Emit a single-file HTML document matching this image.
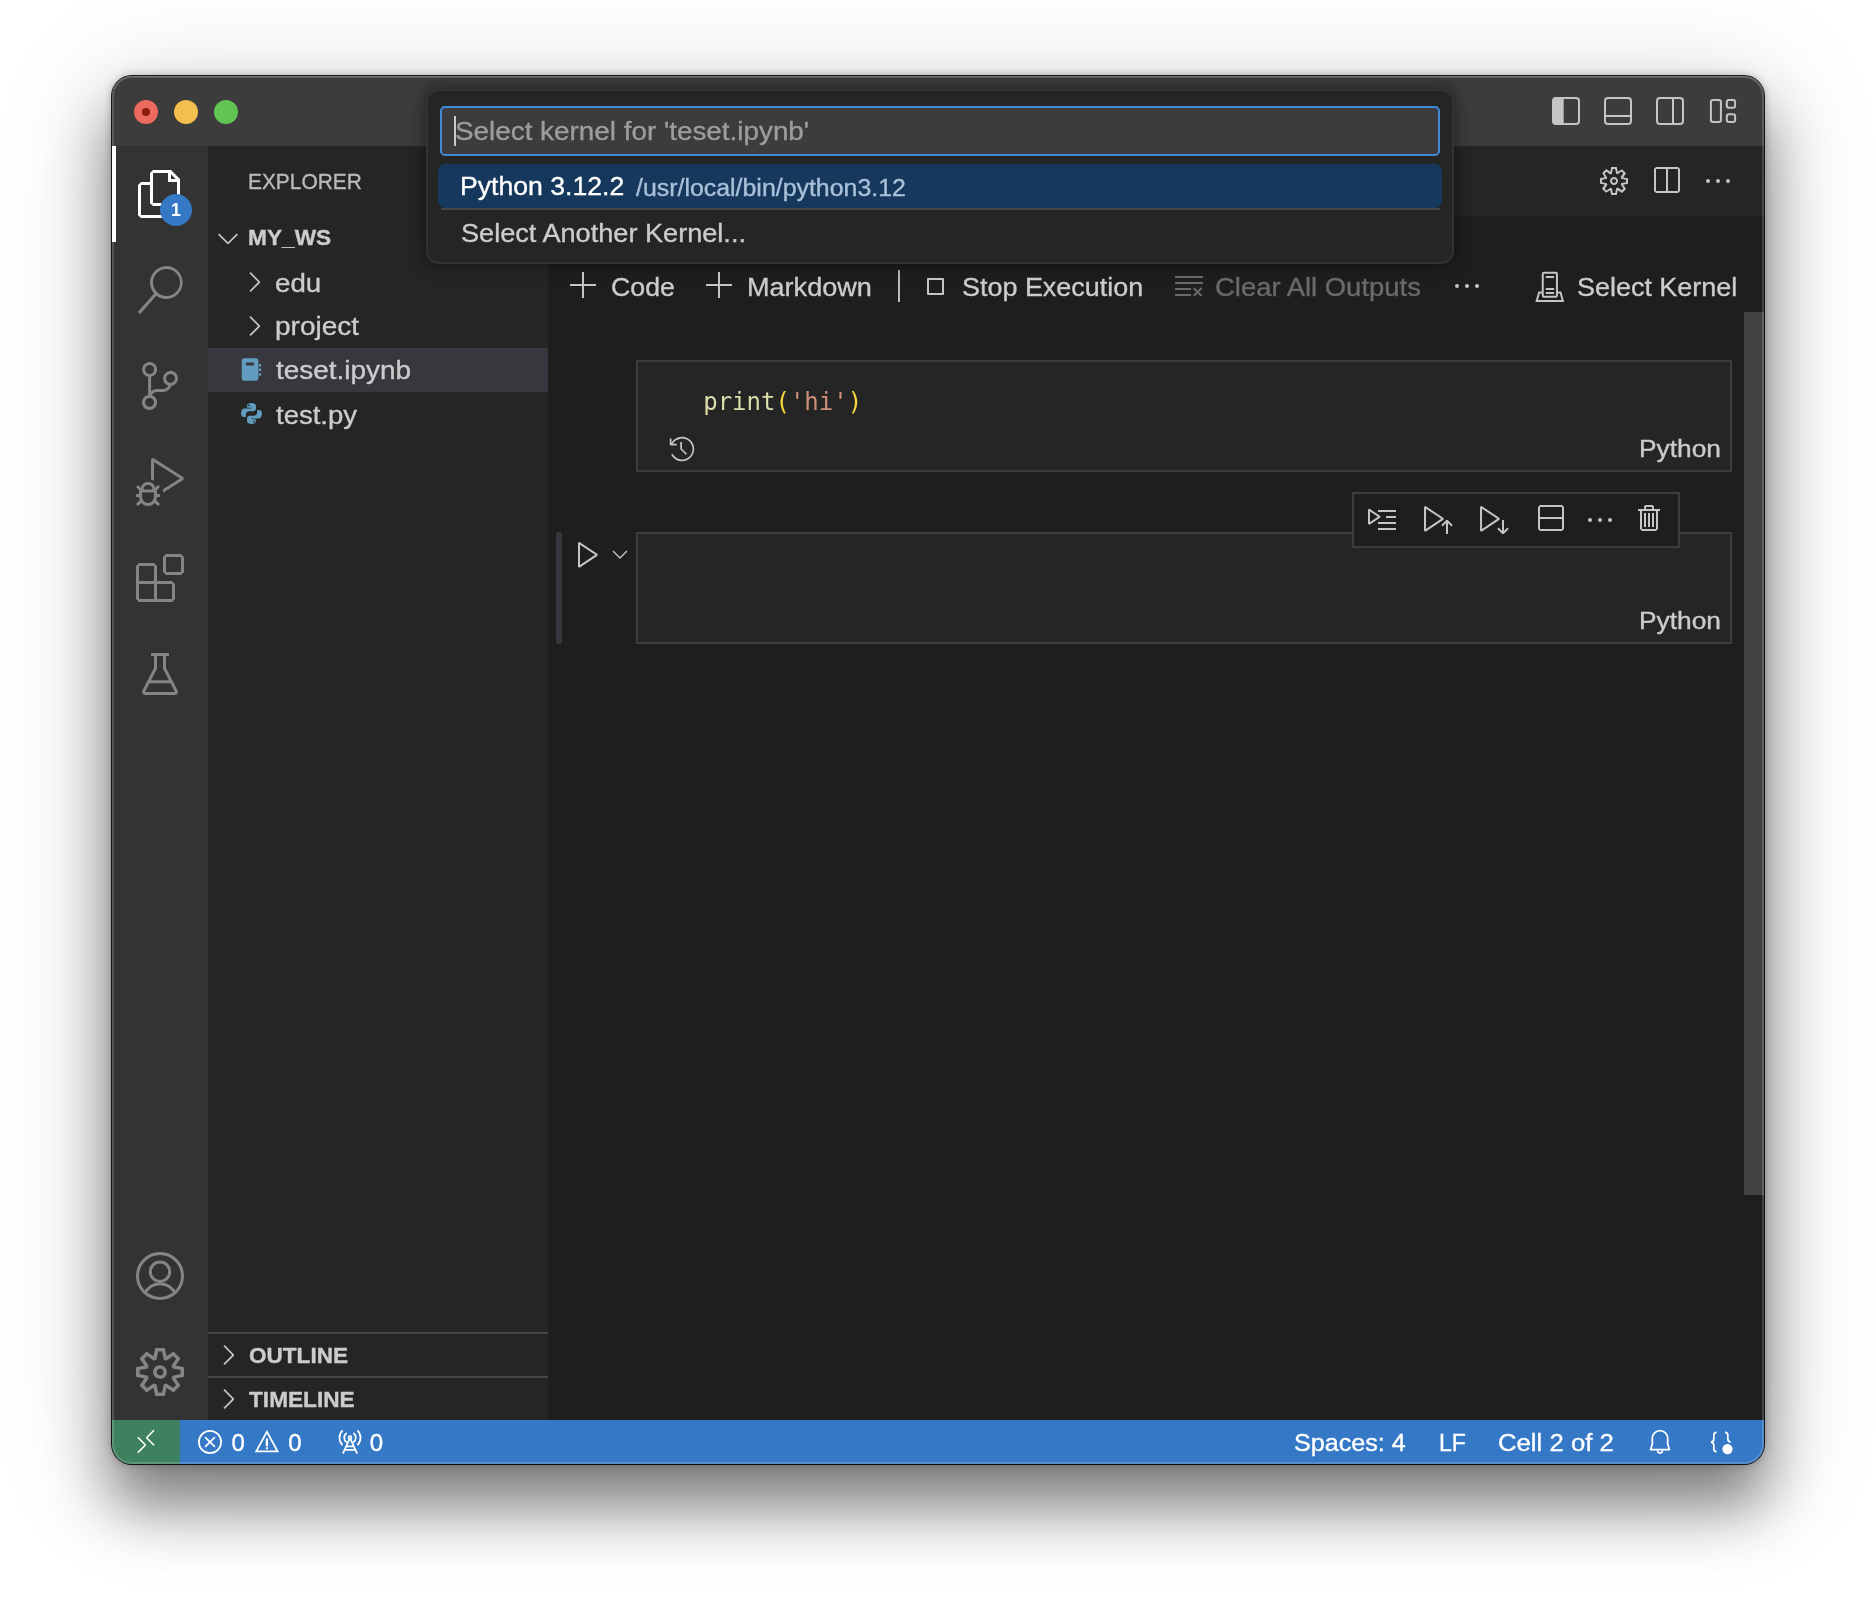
<!DOCTYPE html>
<html lang="en">
<head>
<meta charset="utf-8">
<title>teset.ipynb — my_ws</title>
<style>
html,body{margin:0;padding:0;}
body{width:1876px;height:1612px;background:#ffffff;overflow:hidden;position:relative;font-family:"Liberation Sans",sans-serif;}
#shadow{position:absolute;left:112px;top:76px;width:1652px;height:1388px;border-radius:20px;
  box-shadow:0 0 0 1px rgba(0,0,0,.88),0 0 8px 1px rgba(0,0,0,.24),0 40px 60px 2px rgba(0,0,0,.46),0 16px 110px 14px rgba(0,0,0,.13);}
#win{position:absolute;left:112px;top:76px;width:1652px;height:1388px;border-radius:20px;overflow:hidden;background:#1e1e1e;}
#pg{will-change:transform;position:absolute;left:-112px;top:-76px;width:1876px;height:1612px;}
#pg div,#pg svg{position:absolute;}
.t{white-space:pre;transform-origin:0 0;-webkit-text-stroke:0.35px;}
.m{-webkit-text-stroke:0;}
#hl{left:112px;top:76px;width:1652px;height:1388px;border-radius:20px;box-shadow:inset 0 1px 0 0 rgba(255,255,255,.16),inset 0 0 0 2px rgba(255,255,255,.17);pointer-events:none;}
</style>
</head>
<body>
<div id="shadow"></div>
<div id="win"><div id="pg">
<!-- base panes -->
<div style="left:112px;top:76px;width:1652px;height:70px;background:#3c3c3c"></div>
<div style="left:112px;top:146px;width:96px;height:1274px;background:#333333"></div>
<div style="left:208px;top:146px;width:340px;height:1274px;background:#252526"></div>
<div style="left:548px;top:146px;width:1216px;height:1274px;background:#1e1e1e"></div>
<div style="left:548px;top:146px;width:1216px;height:70px;background:#252526"></div>
<!-- traffic lights -->
<div style="left:134px;top:100px;width:24px;height:24px;border-radius:50%;background:#ed6a5e"></div>
<div style="left:142px;top:108px;width:8px;height:8px;border-radius:50%;background:#8c1a10"></div>
<div style="left:174px;top:100px;width:24px;height:24px;border-radius:50%;background:#f5bf4f"></div>
<div style="left:214px;top:100px;width:24px;height:24px;border-radius:50%;background:#61c554"></div>
<!-- activity bar active indicator + badge -->
<div style="left:112px;top:146px;width:4px;height:96px;background:#ffffff"></div>
<!-- sidebar selection + section borders -->
<div style="left:208px;top:348px;width:340px;height:44px;background:#37373d"></div>
<div style="left:208px;top:1332px;width:340px;height:2px;background:#454546"></div>
<div style="left:208px;top:1376px;width:340px;height:2px;background:#454546"></div>
<!-- notebook toolbar separator -->
<div style="left:898px;top:270px;width:2px;height:32px;background:#bdbdbd"></div>
<!-- cells -->
<div style="left:636px;top:360px;width:1092px;height:108px;background:#252526;border:2px solid #3b3b40"></div>
<div style="left:636px;top:532px;width:1092px;height:108px;background:#252526;border:2px solid #3b3b40"></div>
<div style="left:556px;top:532px;width:6px;height:112px;border-radius:3px;background:#37373d"></div>
<div style="left:1352px;top:492px;width:324px;height:52px;background:#1e1e1e;border:2px solid #3b3b40"></div>
<!-- scrollbar -->
<div style="left:1744px;top:312px;width:20px;height:883px;background:#424242"></div>
<!-- status bar -->
<div style="left:112px;top:1420px;width:1652px;height:44px;background:#3478c6"></div>
<div style="left:112px;top:1420px;width:68px;height:44px;background:#3e8160"></div>
<!-- quick pick -->
<div id="qp" style="left:426px;top:89px;width:1024px;height:171px;background:#252526;border:2px solid #323233;border-radius:13px;box-shadow:0 0 16px 2px rgba(0,0,0,.40)"></div>
<div style="left:440px;top:106px;width:996px;height:46px;background:#3c3c3c;border:2px solid #3e8ad8;border-radius:5px"></div>
<div style="left:454px;top:116px;width:2px;height:30px;background:#c8c8c8"></div>
<div style="left:438px;top:164px;width:1004px;height:44px;background:#17385d;border-radius:7px"></div>
<div style="left:441px;top:208px;width:999px;height:2px;background:#454547"></div>
<svg style='left:136px;top:170px' width='48' height='48' viewBox='0 0 24 24' fill='#ffffff' ><path  d='M17.5 0h-9L7 1.5V6H2.5L1 7.5v15.07L2.5 24h12.07L16 22.57V18h4.7l1.3-1.43V4.5L17.5 0zm0 2.12l2.38 2.38H17.5V2.12zm-3 20.38h-12v-15H7v9.07L8.5 18h6v4.5zm6-6h-12v-15H16V6h4.5v10.5z'/></svg>
<svg style='left:136px;top:266px' width='48' height='48' viewBox='0 0 24 24' fill='#858585' ><path  d='M15.25 0a8.25 8.25 0 0 0-6.18 13.72L1 22.88l1.12 1.12 8.05-9.12A8.251 8.251 0 1 0 15.25.01V0zm0 15a6.75 6.75 0 1 1 0-13.5 6.75 6.75 0 0 1 0 13.5z'/></svg>
<svg style='left:136px;top:362px' width='48' height='48' viewBox='0 0 24 24' fill='#858585' ><path  d='M21.007 8.222A3.738 3.738 0 0 0 15.045 5.2a3.737 3.737 0 0 0 1.156 6.583 2.988 2.988 0 0 1-2.668 1.67h-2.99a4.456 4.456 0 0 0-2.989 1.165V7.4a3.737 3.737 0 1 0-1.494 0v9.117a3.776 3.776 0 1 0 1.816.099 2.99 2.99 0 0 1 2.668-1.667h2.99a4.484 4.484 0 0 0 4.223-3.039 3.736 3.736 0 0 0 3.25-3.687zM4.565 3.738a2.242 2.242 0 1 1 4.484 0 2.242 2.242 0 0 1-4.484 0zm4.484 16.441a2.242 2.242 0 1 1-4.484 0 2.242 2.242 0 0 1 4.484 0zm8.221-9.715a2.242 2.242 0 1 1 0-4.485 2.242 2.242 0 0 1 0 4.485z'/></svg>
<svg style='left:136px;top:458px' width='48' height='48' viewBox='0 0 24 24' fill='#858585' ><path  d='M10.94 13.5l-1.32 1.32a3.73 3.73 0 0 0-7.24 0L1.06 13.5 0 14.56l1.72 1.72-.22.22V18H0v1.5h1.5v.08c.077.489.214.966.41 1.42L0 22.94 1.06 24l1.65-1.65A4.308 4.308 0 0 0 6 24a4.31 4.31 0 0 0 3.29-1.65L10.94 24 12 22.94 10.09 21c.198-.464.336-.951.41-1.45v-.1H12V18h-1.5v-1.5l-.22-.22L12 14.56l-1.06-1.06zM6 13.5a2.25 2.25 0 0 1 2.25 2.25h-4.5A2.25 2.25 0 0 1 6 13.5zm3 6a3.33 3.33 0 0 1-3 3 3.33 3.33 0 0 1-3-3v-2.25h6v2.25zm14.76-9.9v1.26L13.5 17.37V15.6l8.5-5.37L9 2v9.46a5.07 5.07 0 0 0-1.5-.72V.63L8.64 0l15.12 9.6z'/></svg>
<svg style='left:136px;top:554px' width='48' height='48' viewBox='0 0 24 24' fill='#858585' ><path  d='M13.5 1.5L15 0h7.5L24 1.5V9l-1.5 1.5H15L13.5 9V1.5zm1.5 0V9h7.5V1.5H15zM0 15V6l1.5-1.5H9L10.5 6v7.5H18l1.5 1.5v7.5L18 24H1.5L0 22.5V15zm9-1.5V6H1.5v7.5H9zM9 15H1.5v7.5H9V15zm1.5 7.500H18V15h-7.5v7.5z'/></svg>
<svg style='left:136px;top:650px' width='48' height='48' viewBox='0 0 16 16' fill='#858585' ><path  d='M13.893 13.558L10 6.006v-4h1v-1H9.994V1H6v.006H5v1h1v4l-3.893 7.552A1 1 0 0 0 2.994 15h10.012a1 1 0 0 0 .887-1.442zM7 6.249V2.006h2v4.243l1.983 3.851H5.017L7 6.249zM2.994 14l1.502-2.9h6.996L12.994 14H2.994z'/></svg>
<svg style='left:136px;top:1348px' width='48' height='48' viewBox='0 0 24 24' fill='#858585' ><path  d='M19.85 8.75l4.15.83v4.84l-4.15.83 2.35 3.52-3.43 3.43-3.52-2.35-.83 4.15H9.58l-.83-4.15-3.52 2.35-3.43-3.43 2.35-3.52L0 14.42V9.58l4.15-.83L1.8 5.23 5.23 1.8l3.52 2.35L9.58 0h4.84l.83 4.15 3.52-2.35 3.43 3.43-2.35 3.52zm-1.57 5.07l4-.81v-2l-4-.81-.54-1.3 2.29-3.43-1.43-1.43-3.43 2.29-1.3-.54-.81-4h-2l-.81 4-1.3.54-3.43-2.29-1.43 1.43L6.38 8.9l-.54 1.3-4 .81v2l4 .81.54 1.3-2.29 3.43 1.43 1.43 3.43-2.29 1.3.54.81 4h2l.81-4 1.3-.54 3.43 2.29 1.43-1.43-2.29-3.43.54-1.3zm-8.186-4.672A3.43 3.43 0 0 1 12 8.57 3.44 3.44 0 0 1 15.43 12a3.43 3.43 0 1 1-5.336-2.852zm.956 4.274c.281.188.612.288.95.288A1.7 1.7 0 0 0 13.71 12a1.71 1.71 0 1 0-2.66 1.422z'/></svg>
<svg style='left:136px;top:1252px' width='48' height='48' viewBox='0 0 24 24' fill='#858585' ><circle cx='12' cy='12' r='11.25' fill='none' stroke='#858585' stroke-width='1.5'/><circle cx='12' cy='9.85' r='4.85' fill='none' stroke='#858585' stroke-width='1.5'/><path d='M4.32 21A8.3 8.3 0 0 1 19.68 21' fill='none' stroke='#858585' stroke-width='1.5'/></svg>
<svg style='left:212px;top:222px' width='32' height='32' viewBox='0 0 16 16' fill='#c5c5c5' ><path  d='M7.976 10.072l4.357-4.357.62.618L8.284 11h-.618L3 6.333l.619-.618 4.357 4.357z'/></svg>
<svg style='left:238px;top:266px' width='32' height='32' viewBox='0 0 16 16' fill='#c5c5c5' ><path  d='M10.072 8.024L5.715 3.667l.618-.62L11 7.716v.618L6.333 13l-.618-.619 4.357-4.357z'/></svg>
<svg style='left:238px;top:310px' width='32' height='32' viewBox='0 0 16 16' fill='#c5c5c5' ><path  d='M10.072 8.024L5.715 3.667l.618-.62L11 7.716v.618L6.333 13l-.618-.619 4.357-4.357z'/></svg>
<svg style='left:212px;top:1339px' width='32' height='32' viewBox='0 0 16 16' fill='#c5c5c5' ><path  d='M10.072 8.024L5.715 3.667l.618-.62L11 7.716v.618L6.333 13l-.618-.619 4.357-4.357z'/></svg>
<svg style='left:212px;top:1383px' width='32' height='32' viewBox='0 0 16 16' fill='#c5c5c5' ><path  d='M10.072 8.024L5.715 3.667l.618-.62L11 7.716v.618L6.333 13l-.618-.619 4.357-4.357z'/></svg>
<svg style='left:1598px;top:165px' width='32' height='32' viewBox='0 0 16 16' fill='#c5c5c5' ><path  d='M9.1 4.4L8.6 2H7.4l-.5 2.4-.7.3-2-1.3-.9.8 1.3 2-.2.7-2.4.5v1.2l2.4.5.3.8-1.3 2 .8.8 2-1.3.8.3.4 2.3h1.2l.5-2.4.8-.3 2 1.3.8-.8-1.3-2 .3-.8 2.3-.4V7.4l-2.4-.5-.3-.8 1.3-2-.8-.8-2 1.3-.7-.2zM9.4 1l.5 2.4L12 2.1l2 2-1.4 2.1 2.4.4v2.8l-2.4.5L14 12l-2 2-2.1-1.4-.5 2.4H6.6l-.5-2.4L4 13.9l-2-2 1.4-2.1L1 9.4V6.6l2.4-.5L2.1 4l2-2 2.1 1.4.4-2.4h2.8zm.6 7c0 1.1-.9 2-2 2s-2-.9-2-2 .9-2 2-2 2 .9 2 2zM8 9c.6 0 1-.4 1-1s-.4-1-1-1-1 .4-1 1 .4 1 1 1z'/></svg>
<svg style='left:1650px;top:165px' width='32' height='32' viewBox='0 0 16 16' fill='#c5c5c5' ><path  d='M14 1H3L2 2v11l1 1h11l1-1V2l-1-1zM8 13H3V2h5v11zm6 0H9V2h5v11z'/></svg>
<svg style='left:1702px;top:165px' width='32' height='32' viewBox='0 0 16 16' fill='#c5c5c5' ><path  d='M4 8a1 1 0 1 1-2 0 1 1 0 0 1 2 0zm5 0a1 1 0 1 1-2 0 1 1 0 0 1 2 0zm5 0a1 1 0 1 1-2 0 1 1 0 0 1 2 0z'/></svg>
<svg style='left:568px;top:270px' width='32' height='32' viewBox='0 0 16 16' fill='#c5c5c5' ><path  d='M14 7v1H8v6H7V8H1V7h6V1h1v6h6z'/></svg>
<svg style='left:704px;top:270px' width='32' height='32' viewBox='0 0 16 16' fill='#c5c5c5' ><path  d='M14 7v1H8v6H7V8H1V7h6V1h1v6h6z'/></svg>
<div style='left:927px;top:278px;width:13px;height:13px;border:2px solid #c5c5c5;border-radius:1px'></div>
<svg style='left:1173px;top:270px' width='32' height='32' viewBox='0 0 16 16' fill='#6a6a6a' ><path  d='M10 12.6l.7.7 1.6-1.6 1.6 1.6.8-.7L13 11l1.7-1.6-.8-.8-1.6 1.700-1.600-1.700-.7.8 1.600 1.600-1.600 1.600zM1 4h14V3H1v1zm0 3h14V6H1v1zm8 2.500V9H1v1h8v-.5zM9 13v-1H1v1h8z'/></svg>
<svg style='left:1450.6px;top:270px' width='32' height='32' viewBox='0 0 16 16' fill='#c5c5c5' ><path  d='M4 8a1 1 0 1 1-2 0 1 1 0 0 1 2 0zm5 0a1 1 0 1 1-2 0 1 1 0 0 1 2 0zm5 0a1 1 0 1 1-2 0 1 1 0 0 1 2 0z'/></svg>
<svg style='left:667.7px;top:435px' width='28' height='28' viewBox='0 0 16 16' fill='#c5c5c5' ><path  d='M13.507 12.324a7 7 0 0 0 .065-8.56A7 7 0 0 0 2 4.393V2H1v3.5l.5.5H5V5H2.811a6.008 6.008 0 1 1-.135 5.77l-.887.462a7 7 0 0 0 11.718 1.092zm-3.361-.97l.708-.707L8 7.792V4H7v4l.146.354 3 3z'/></svg>
<svg style='left:572.3px;top:537.5px' width='32' height='32' viewBox='0 0 16 16' fill='#c5c5c5' ><path  d='M3.78 2L3 2.41v12l.78.42 9-6V8l-9-6zM4 13.480V3.350l7.6 5.070L4 13.480z'/></svg>
<svg style='left:607.6px;top:542.1px' width='24' height='24' viewBox='0 0 16 16' fill='#c5c5c5' ><path  d='M7.976 10.072l4.357-4.357.62.618L8.284 11h-.618L3 6.333l.619-.618 4.357 4.357z'/></svg>
<svg style='left:1422px;top:503.5px' width='32' height='32' viewBox='0 0 16 16' fill='#c5c5c5' ><path  d='M1.770 1.010L1 1.420v12l.78.420 9-6v-.830l-9.010-6zM2 12.490V2.360l7.600 5.070L2 12.490zM12.150 8h.710l2.500 2.500-.710.710L13 9.560V15h-1V9.550l-1.650 1.650-.700-.700 2.500-2.500z'/></svg>
<svg style='left:1478px;top:503.5px' width='32' height='32' viewBox='0 0 16 16' fill='#c5c5c5' ><path  d='M1.800 1.010l-.780.410v12l.780.420 9-6v-.830l-9-6zm.220 11.480V2.360l7.600 5.070-7.600 5.060zM12.850 15h-.710l-2.500-2.500.710-.710L12 13.440V8h1v5.450l1.650-1.650.710.710L12.850 15z'/></svg>
<svg style='left:1534px;top:503px' width='32' height='32' viewBox='0 0 16 16' fill='#c5c5c5' ><path  d='M14 1H3L2 2v11l1 1h11l1-1V2l-1-1zm0 12H3V8h11v5zm0-6H3V2h11v5z'/></svg>
<svg style='left:1584px;top:503.5px' width='32' height='32' viewBox='0 0 16 16' fill='#c5c5c5' ><path  d='M4 8a1 1 0 1 1-2 0 1 1 0 0 1 2 0zm5 0a1 1 0 1 1-2 0 1 1 0 0 1 2 0zm5 0a1 1 0 1 1-2 0 1 1 0 0 1 2 0z'/></svg>
<svg style='left:1634px;top:503px' width='32' height='32' viewBox='0 0 16 16' fill='#c5c5c5' ><path  d='M10 3h3v1h-1v9l-1 1H4l-1-1V4H2V3h3V2a1 1 0 0 1 1-1h3a1 1 0 0 1 1 1v1zM9 2H6v1h3V2zM4 13h7V4H4v9zm2-8H5v7h1V5zm1 0h1v7H7V5zm2 0h1v7H9V5z'/></svg>
<svg style='left:132px;top:1428px' width='28' height='28' viewBox='0 0 16 16' fill='#ffffff' ><path  d='M12.904 9.570L8.928 5.596l3.976-3.976-.619-.620L8 5.286v.619l4.285 4.285.620-.618zM3 5.620l4.072 4.070L3 13.763l.619.618L8 10v-.619L3.619 5 3 5.619z'/></svg>
<div style='left:160px;top:194px;width:32px;height:32px;border-radius:50%;background:#3478c6'></div>
<svg style='left:1366px;top:503.5px' width='32' height='32' viewBox='0 0 16 16' fill='#c5c5c5' ><path  d='M6 10V9h9v1H6zm4-4h5v1h-5V6zm5-3v1H6V3h9zm-9 9v1h9v-1H6z M1 2.795l.783-.419 5.371 3.581v.838l-5.371 3.581L1 9.957V2.795zm1 .934v5.294l3.97-2.647L2 3.729z'/></svg>
<svg style='left:1550px;top:95px' width='32' height='32' viewBox='0 0 32 32' ><rect x='3' y='3' width='26' height='26' rx='3' fill='none' stroke='#c5c5c5' stroke-width='2'/><path d='M3 5a2 2 0 0 1 2-2h8.700v26H5a2 2 0 0 1-2-2z' fill='#c5c5c5'/></svg>
<svg style='left:1602px;top:95px' width='32' height='32' viewBox='0 0 32 32' ><rect x='3' y='3' width='26' height='26' rx='3' fill='none' stroke='#c5c5c5' stroke-width='2'/><path d='M3 21h26' fill='none' stroke='#c5c5c5' stroke-width='2'/></svg>
<svg style='left:1654px;top:95px' width='32' height='32' viewBox='0 0 32 32' ><rect x='3' y='3' width='26' height='26' rx='3' fill='none' stroke='#c5c5c5' stroke-width='2'/><path d='M19 3v26' fill='none' stroke='#c5c5c5' stroke-width='2'/></svg>
<svg style='left:1707px;top:95px' width='32' height='32' viewBox='0 0 32 32' ><rect x='3.9' y='5' width='10' height='22' rx='2' fill='none' stroke='#c5c5c5' stroke-width='2'/><rect x='19.8' y='5' width='8.3' height='7.7' rx='2' fill='none' stroke='#c5c5c5' stroke-width='2'/><rect x='19.8' y='19.2' width='8.300' height='7.860' rx='2' fill='none' stroke='#c5c5c5' stroke-width='2'/></svg>
<svg style='left:1534px;top:270px' width='32' height='34' viewBox='0 0 32 34' ><rect x='8.75' y='2.84' width='14.2' height='23.8' rx='1.2' fill='none' stroke='#c5c5c5' stroke-width='2'/><path d='M11.8 7.05h8.3M11.8 19h8.3M11.8 22.95h8.300' stroke='#c5c5c5' stroke-width='2' fill='none'/><path d='M8.750 22.600H5.100L2.700 31.100H28.900L26.500 22.600H22.950' fill='none' stroke='#c5c5c5' stroke-width='2' stroke-linejoin='miter'/></svg>
<svg style='left:240px;top:356px' width='24' height='26' viewBox='0 0 24 26' ><rect x='1.76' y='2.2' width='16.64' height='22.6' rx='2.8' fill='#629dbf'/><rect x='5.8' y='6.4' width='8.4' height='3.1' rx='1' fill='#37373d'/><rect x='19' y='7.9' width='2.2' height='2.5' rx='.4' fill='#629dbf'/><rect x='19' y='12.6' width='2.2' height='2.5' rx='.4' fill='#629dbf'/><rect x='19' y='17.2' width='2.2' height='2.6' rx='.4' fill='#629dbf'/></svg>
<svg style='left:241px;top:402.9px' width='21' height='21' viewBox='0 0 24 24' ><path fill='#629dbf' d='M11.8 0C8.9 0 7 1.1 7 3.1V5.500h5V6.400H4.200C2 6.400.400 8 .100 10.700c-.3 2.800.7 5.300 3.200 5.300H5.500v-2.900c0-2 1.700-3.600 3.700-3.600h5c1.600 0 2.900-1.300 2.900-2.900V3.100C17.100 1.300 15 0 11.800 0zM9.100 1.600a1 1 0 1 1 0 2 1 1 0 0 1 0-2z'/><path fill='#629dbf' d='M12.200 24c2.900 0 4.800-1.100 4.800-3.100V18.500h-5V17.600h7.800c2.200 0 3.800-1.600 4.100-4.300.3-2.800-.7-5.300-3.200-5.300H18.500v2.900c0 2-1.700 3.600-3.700 3.600h-5c-1.600 0-2.900 1.300-2.900 2.900v3.500C6.900 22.700 9 24 12.200 24zm2.700-1.600a1 1 0 1 1 0-2 1 1 0 0 1 0 2z'/></svg>
<svg style='left:196px;top:1427.8px' width='28' height='28' viewBox='0 0 16 16' fill='#fff' ><circle cx='8' cy='8' r='6.35' fill='none' stroke='#ffffff' stroke-width='1'/><path d='M5.2 5.2l5.6 5.6M10.8 5.2l-5.6 5.600' fill='none' stroke='#ffffff' stroke-width='1'/></svg>
<svg style='left:252.8px;top:1428px' width='28' height='28' viewBox='0 0 16 16' fill='#fff' ><path d='M7.94 2.15L14.05 13.4H1.83z' fill='none' stroke='#ffffff' stroke-width='1' stroke-linejoin='miter'/><path d='M7.3 6h1.300v4.400H7.300zM7.300 11h1.300v1.200H7.300z' fill='#fff'/></svg>
<svg style='left:335.5px;top:1428px' width='28' height='28' viewBox='0 0 16 16' fill='#fff' ><circle cx='8' cy='5.54' r='.85' fill='none' stroke='#ffffff' stroke-width='1'/><path d='M7.700 6.300L3.900 14.600M8.300 6.300L12.100 14.600M5.950 10.460h4.100M4.900 12.570h6.200' fill='none' stroke='#ffffff' stroke-width='1'/><path d='M6.107 2.837A3.300 3.300 0 0 0 6.107 8.243M9.893 2.837A3.300 3.300 0 0 1 9.893 8.243M3.757 1.297A6 6 0 0 0 3.757 9.783M12.243 1.297A6 6 0 0 1 12.243 9.783' fill='none' stroke='#ffffff' stroke-width='1'/></svg>
<svg style='left:1646.2px;top:1428px' width='28' height='28' viewBox='0 0 16 16' fill='#fff' ><path d='M2.600 12.400L3.600 9.200V5.870A4.400 4.400 0 0 1 12.400 5.870V9.200L13.400 12.400Z' fill='none' stroke='#ffffff' stroke-width='1' stroke-linejoin='round'/><path d='M6.600 12.900a1.400 1.400 0 0 0 2.800 0' fill='none' stroke='#ffffff' stroke-width='1'/></svg>
<svg style='left:1706.5px;top:1428px' width='28' height='28' viewBox='0 0 16 16' fill='#fff' ><path d='M5.500 2.550C4.400 2.550 3.900 3.100 3.900 4.100V6.300C3.900 7.300 3.300 7.900 2.300 8.030C3.300 8.150 3.900 8.800 3.900 9.800V12C3.900 13 4.400 13.500 5.500 13.500M10.300 2.550C11.400 2.550 11.900 3.100 11.900 4.100V6.300C11.900 7.300 12.500 7.900 13.500 8.030' fill='none' stroke='#ffffff' stroke-width='1'/><circle cx='11.710' cy='12.060' r='2.940' fill='#fff'/></svg>

<div class='t qp' style='left:455.0px;top:118.4px;font:400 26.65px/1 "Liberation Sans", sans-serif;transform:scaleX(1.0450);color:#9d9d9d'>Select kernel for 'teset.ipynb'</div>
<div class='t qp' style='left:460.0px;top:173.4px;font:400 26.65px/1 "Liberation Sans", sans-serif;transform:scaleX(0.9994);color:#ffffff'>Python 3.12.2</div>
<div class='t qp' style='left:636.0px;top:175.7px;font:400 23.98px/1 "Liberation Sans", sans-serif;transform:scaleX(1.0385);color:#a9c1d9'>/usr/local/bin/python3.12</div>
<div class='t qp' style='left:461.0px;top:219.7px;font:400 26.65px/1 "Liberation Sans", sans-serif;transform:scaleX(1.0181);color:#cccccc'>Select Another Kernel...</div>
<div class='t ' style='left:248.1px;top:170.7px;font:400 22px/1 "Liberation Sans", sans-serif;transform:scaleX(0.9497);color:#bbbbbb'>EXPLORER</div>
<div class='t ' style='left:248.0px;top:227.4px;font:700 22px/1 "Liberation Sans", sans-serif;transform:scaleX(1.0316);color:#cccccc'>MY_WS</div>
<div class='t ' style='left:275.3px;top:269.6px;font:400 26.65px/1 "Liberation Sans", sans-serif;transform:scaleX(1.0391);color:#cccccc'>edu</div>
<div class='t ' style='left:275.2px;top:313.4px;font:400 26.65px/1 "Liberation Sans", sans-serif;transform:scaleX(1.0520);color:#cccccc'>project</div>
<div class='t ' style='left:276.3px;top:357.4px;font:400 26.65px/1 "Liberation Sans", sans-serif;transform:scaleX(1.0482);color:#cccccc'>teset.ipynb</div>
<div class='t ' style='left:276.3px;top:401.5px;font:400 26.65px/1 "Liberation Sans", sans-serif;transform:scaleX(1.0321);color:#cccccc'>test.py</div>
<div class='t ' style='left:249.0px;top:1344.8px;font:700 22px/1 "Liberation Sans", sans-serif;transform:scaleX(1.0253);color:#cccccc'>OUTLINE</div>
<div class='t ' style='left:249.0px;top:1388.8px;font:700 22px/1 "Liberation Sans", sans-serif;transform:scaleX(1.0295);color:#cccccc'>TIMELINE</div>
<div class='t ' style='left:611.0px;top:273.5px;font:400 26.65px/1 "Liberation Sans", sans-serif;transform:scaleX(1.0021);color:#cccccc'>Code</div>
<div class='t ' style='left:746.8px;top:273.5px;font:400 26.65px/1 "Liberation Sans", sans-serif;transform:scaleX(1.0161);color:#cccccc'>Markdown</div>
<div class='t ' style='left:961.5px;top:273.5px;font:400 26.65px/1 "Liberation Sans", sans-serif;transform:scaleX(1.0108);color:#cccccc'>Stop Execution</div>
<div class='t ' style='left:1215.0px;top:273.5px;font:400 26.65px/1 "Liberation Sans", sans-serif;transform:scaleX(1.0298);color:#6a6a6a'>Clear All Outputs</div>
<div class='t ' style='left:1577.3px;top:273.5px;font:400 26.65px/1 "Liberation Sans", sans-serif;transform:scaleX(1.0113);color:#cccccc'>Select Kernel</div>
<div class='t ' style='left:1638.5px;top:437.0px;font:400 24.6px/1 "Liberation Sans", sans-serif;transform:scaleX(1.0705);color:#cccccc'>Python</div>
<div class='t ' style='left:1638.5px;top:608.8px;font:400 24.6px/1 "Liberation Sans", sans-serif;transform:scaleX(1.0705);color:#cccccc'>Python</div>
<div class='t m' style='left:703.2px;top:389.7px;font:400 24px/1 "DejaVu Sans Mono", "Liberation Mono", monospace;transform:scaleX(1.0000);color:#cccccc'><span style='color:#dcdcaa'>print</span><span style='color:#f8d63e'>(</span><span style='color:#ce9178'>'hi'</span><span style='color:#f8d63e'>)</span></div>
<div class='t ' style='left:231.4px;top:1431.2px;font:400 24px/1 "Liberation Sans", sans-serif;transform:scaleX(1.0000);color:#ffffff'>0</div>
<div class='t ' style='left:288.2px;top:1431.2px;font:400 24px/1 "Liberation Sans", sans-serif;transform:scaleX(1.0000);color:#ffffff'>0</div>
<div class='t ' style='left:369.8px;top:1431.2px;font:400 24px/1 "Liberation Sans", sans-serif;transform:scaleX(1.0000);color:#ffffff'>0</div>
<div class='t ' style='left:1294.3px;top:1430.7px;font:400 24.6px/1 "Liberation Sans", sans-serif;transform:scaleX(1.0223);color:#ffffff'>Spaces: 4</div>
<div class='t ' style='left:1439.0px;top:1431.2px;font:400 24px/1 "Liberation Sans", sans-serif;transform:scaleX(0.9602);color:#ffffff'>LF</div>
<div class='t ' style='left:1498.0px;top:1430.7px;font:400 24.6px/1 "Liberation Sans", sans-serif;transform:scaleX(1.0454);color:#ffffff'>Cell 2 of 2</div>
<div class='t m' style='left:170.9px;top:201.5px;font:700 17.5px/1 "Liberation Sans", sans-serif;transform:scaleX(1.0000);color:#ffffff'>1</div>
<div id="hl"></div>
</div></div>
</body>
</html>
